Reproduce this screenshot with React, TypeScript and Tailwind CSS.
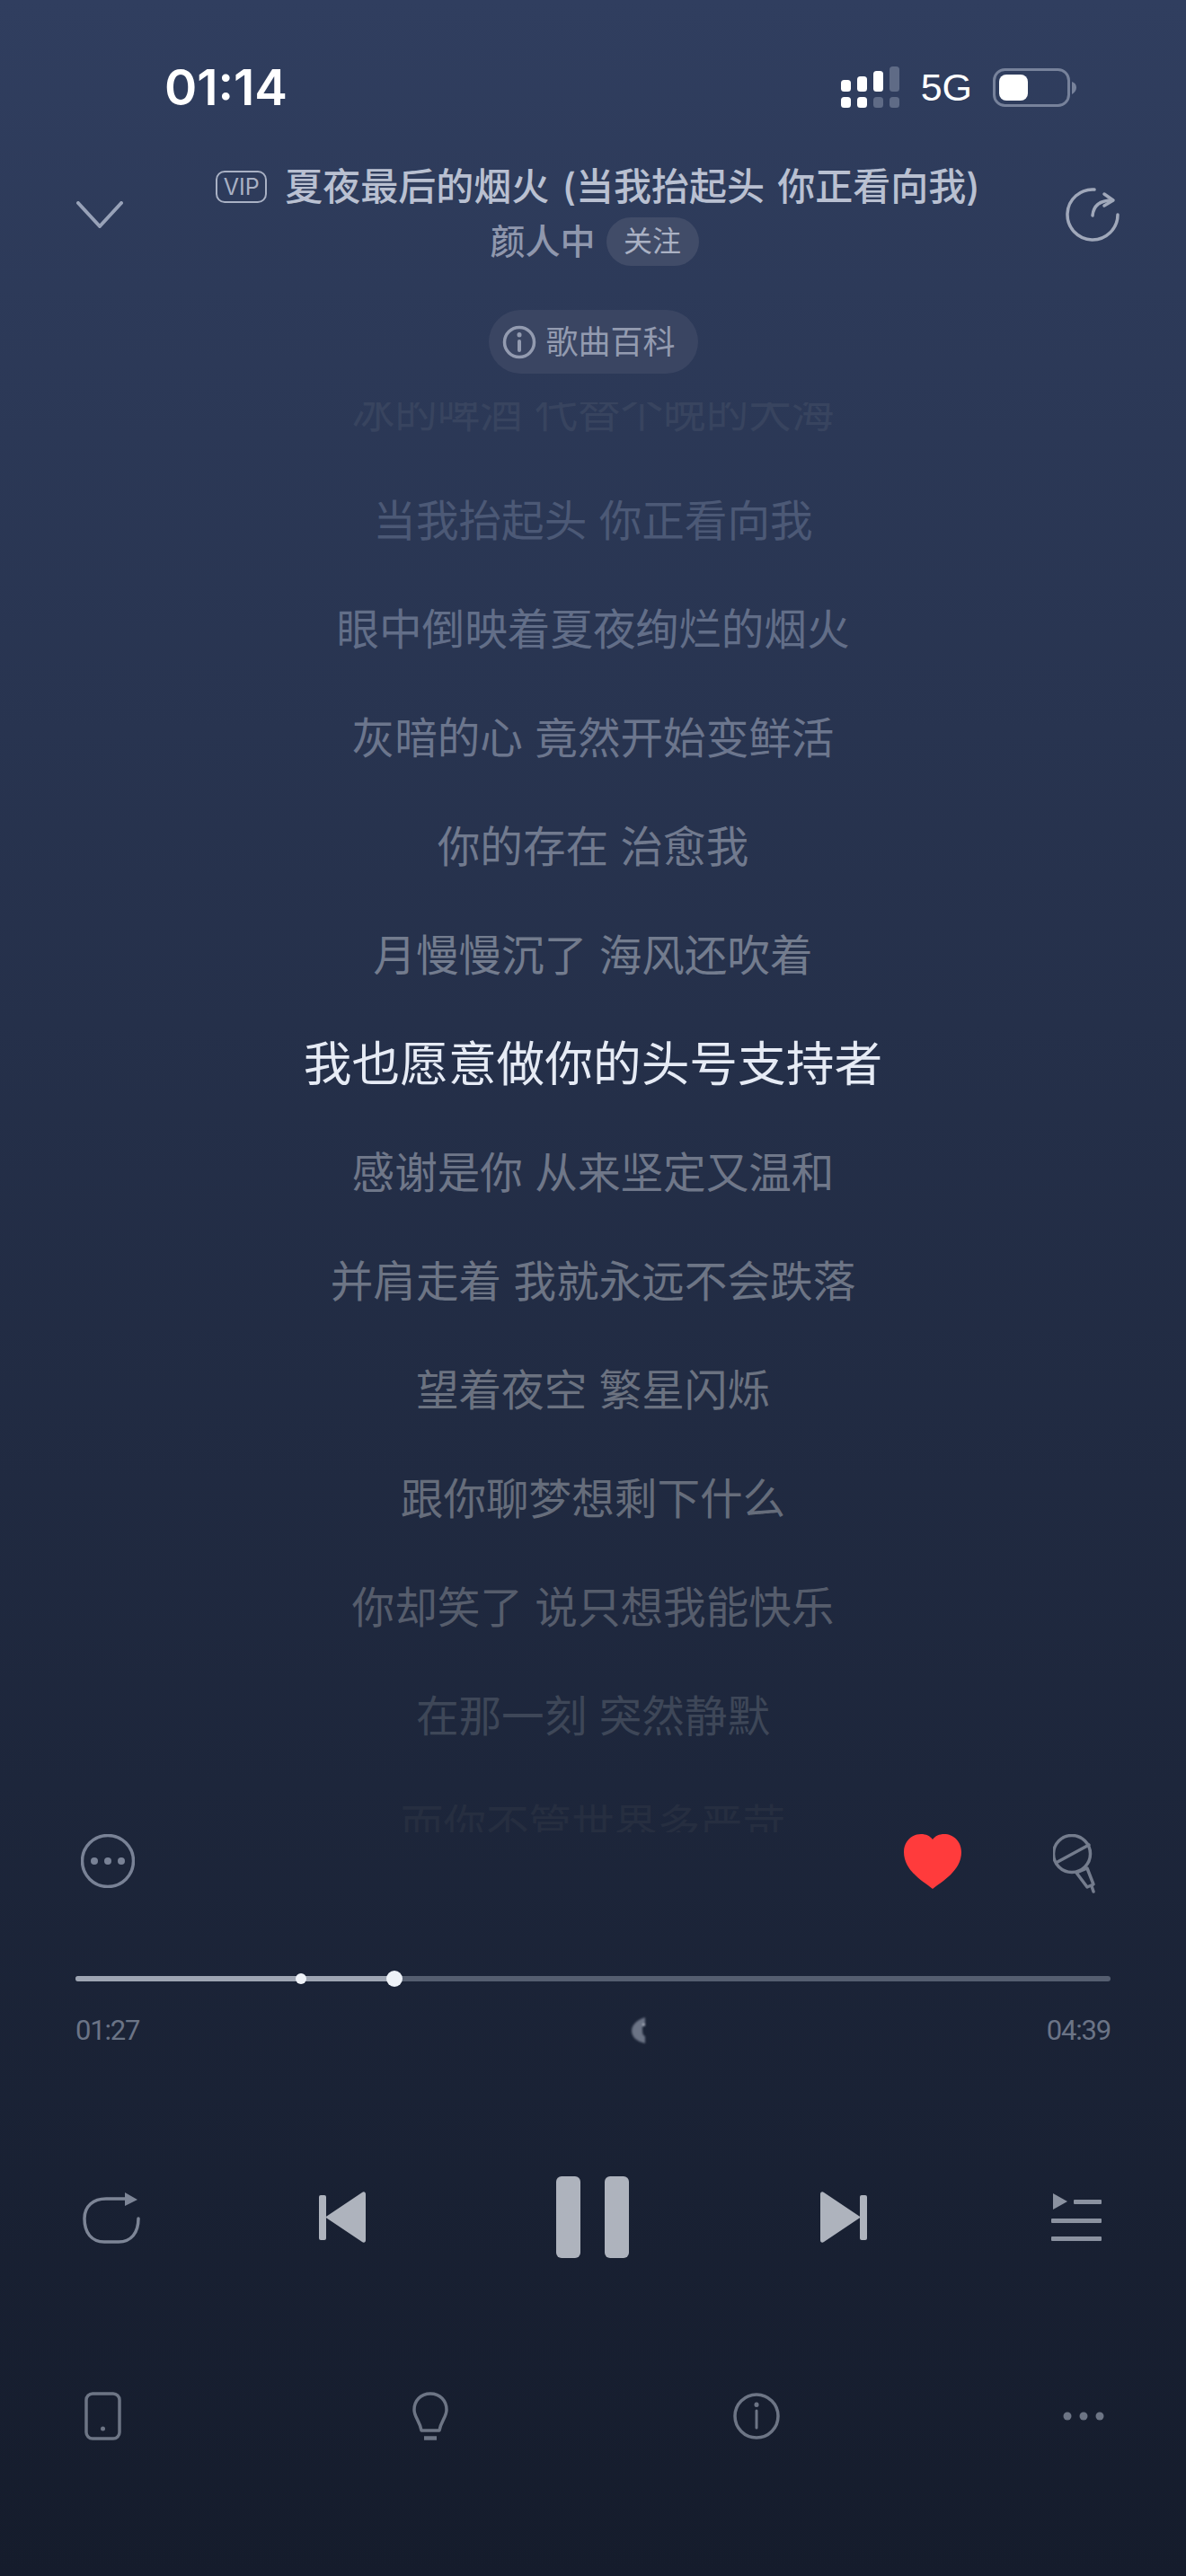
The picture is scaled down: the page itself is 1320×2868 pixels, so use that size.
// Lyrics page of a music player

const cjk = "font-['Inter','Noto_Sans_CJK_SC',sans-serif]";

const lyrics = [
    { text: "冰的啤酒 代替个晚的大海", color: "text-[#38445f]" },
    { text: "当我抬起头 你正看向我", color: "text-[#4c5976]" },
    { text: "眼中倒映着夏夜绚烂的烟火", color: "text-[#626e88]" },
    { text: "灰暗的心 竟然开始变鲜活", color: "text-[#6c768d]" },
    { text: "你的存在 治愈我", color: "text-[#717a8e]" },
    { text: "月慢慢沉了 海风还吹着", color: "text-[#737c8e]" },
    { text: "我也愿意做你的头号支持者", color: "text-[#e6ebf5]", active: true },
    { text: "感谢是你 从来坚定又温和", color: "text-[#6f7789]" },
    { text: "并肩走着 我就永远不会跌落", color: "text-[#6d7585]" },
    { text: "望着夜空 繁星闪烁", color: "text-[#6b7280]" },
    { text: "跟你聊梦想剩下什么", color: "text-[#666d7b]" },
    { text: "你却笑了 说只想我能快乐", color: "text-[#565d6c]" },
    { text: "在那一刻 突然静默", color: "text-[#3e4758]" },
    { text: "而你不管世界多严苛", color: "text-[#262e40]" },
];

function SignalIcon() {
    return (
        <svg width="65" height="46" viewBox="0 0 65 46">
            <rect x="0" y="15" width="11" height="13" rx="3.5" fill="#fff" />
            <rect x="18" y="11" width="11" height="17" rx="3.5" fill="#fff" />
            <rect x="36" y="5" width="11" height="23" rx="3.5" fill="#fff" />
            <rect x="54" y="0" width="11" height="28" rx="3.5" fill="#5f6b86" />
            <rect x="0" y="34" width="11" height="12" rx="3.5" fill="#fff" />
            <rect x="18" y="34" width="11" height="12" rx="3.5" fill="#fff" />
            <rect x="36" y="34" width="11" height="12" rx="3.5" fill="#5f6b86" />
            <rect x="54" y="34" width="11" height="12" rx="3.5" fill="#5f6b86" />
        </svg>
    );
}

function BatteryIcon() {
    return (
        <svg width="93" height="43" viewBox="0 0 93 43">
            <rect x="1.5" y="1.5" width="83" height="40" rx="12" fill="none" stroke="#77829b" strokeWidth="3" />
            <rect x="7" y="7" width="32" height="29" rx="8" fill="#fff" />
            <path d="M88 15 C91 16 93 18 93 21.5 C93 25 91 27 88 29 Z" fill="#77829b" />
        </svg>
    );
}

function ShareIcon() {
    return (
        <svg width="60" height="60" viewBox="0 0 60 60" fill="none" stroke="#a0a8ba" strokeWidth="3.5" strokeLinecap="round" strokeLinejoin="round">
            <path d="M32 2 A28 28 0 1 0 58 30" />
            <path d="M30 31 C31 20 38 14 52 14" />
            <path d="M43 7 L53 14 L43 20" />
        </svg>
    );
}

function MicIcon() {
    return (
        <svg width="48" height="66" viewBox="0 0 48 66" fill="none" stroke="#747c8d" strokeWidth="3.5" strokeLinecap="round" strokeLinejoin="round">
            <circle cx="21" cy="22" r="20.5" />
            <path d="M5 31 L40 12" />
            <path d="M26 43 L38 38 L45 56 L38 59 Z" />
            <path d="M43 58 L45 64" />
        </svg>
    );
}

function PrevIcon({ flip = false }: { flip?: boolean }) {
    return (
        <svg width="52" height="57" viewBox="0 0 52 57" className={flip ? "-scale-x-100" : ""} fill="#aeb3bd">
            <rect x="0" y="4" width="8" height="50" rx="2" />
            <path d="M7 28.5 L48 1 C50 -0.5 52 0.5 52 3 L52 54 C52 56.5 50 57.5 48 56 Z" />
        </svg>
    );
}

function SeekGhost() {
    // the small smudge in the middle of the time row
    return (
        <svg width="16" height="30" viewBox="0 0 16 30" className="ml-[548px] blur-[1px]">
            <path d="M15 1 C5 4 0 10 0 16 C0 23 6 28 15 30 L15 22 C12 21 12 18 12 12 L15 8 Z" fill="#6b7385" />
            <rect x="12" y="8" width="3" height="2.5" fill="#b3b9c5" />
        </svg>
    );
}

export default function App() {
    return (
        <div className={`${cjk} flex h-[2868px] w-[1320px] flex-col overflow-hidden bg-gradient-to-b from-[#303e5f] to-[#151c2c]`}>
            {/* Status bar */}
            <div className="flex h-[178px] items-center justify-between pt-[60px] pb-[44px] pl-[183px] pr-[122px]">
                <span className="text-[55px] font-semibold leading-none text-white">01:14</span>
                <div className="flex items-center">
                    <SignalIcon />
                    <span className="ml-[24px] mr-[23px] font-['Liberation_Sans',sans-serif] text-[43px] leading-none text-white">5G</span>
                    <BatteryIcon />
                </div>
            </div>

            {/* Song header */}
            <div className="flex h-[121px] items-center justify-between pl-[85px] pr-[74px]">
                <svg width="52" height="30" viewBox="0 0 52 30" fill="none" stroke="#98a2b8" strokeWidth="4" strokeLinecap="round" strokeLinejoin="round">
                    <path d="M2 2 L26 28 L50 2" />
                </svg>
                <div className="flex flex-col items-center">
                    <div className="flex h-[60px] items-center pl-[8px]">
                        <span className="mr-[20px] flex h-[36px] w-[57px] items-center justify-center rounded-[10px] border-2 border-[#a9b1c4] text-[25px] leading-none text-[#a9b1c4]">VIP</span>
                        <span className="text-[42px] font-medium leading-none text-[#b9c0d1] [word-spacing:3px]">夏夜最后的烟火 (当我抬起头 你正看向我)</span>
                    </div>
                    <div className="flex h-[61px] items-center">
                        <span className="text-[39px] font-medium leading-none text-[#8f97ad]">颜人中</span>
                        <span className="ml-[12px] flex h-[54px] w-[103px] items-center justify-center rounded-full bg-[#414c68] text-[32px] leading-none text-[#aab1c3]">关注</span>
                    </div>
                </div>
                <ShareIcon />
            </div>

            {/* Song info pill */}
            <div className="mt-[46px] flex justify-center">
                <div className="flex h-[71px] w-[233px] items-center gap-[11px] rounded-full bg-[#3a4562] pl-[15px] text-[36px] leading-none text-[#939bb0]">
                    <svg width="38" height="38" viewBox="0 0 38 38" fill="none" stroke="#939bb0" strokeWidth="3.5" strokeLinecap="round">
                        <circle cx="19" cy="19" r="16.5" />
                        <path d="M19 18 L19 28" strokeWidth="4" />
                        <path d="M19 10.5 L19 11" strokeWidth="5" />
                    </svg>
                    <span className="whitespace-nowrap">歌曲百科</span>
                </div>
            </div>

            {/* Lyrics */}
            <div className="mt-[32px] h-[1592px] overflow-hidden">
                <div className="-mt-[50px] flex flex-col">
                    {lyrics.map((line) => (
                        <div
                            key={line.text}
                            className={`flex h-[121px] items-center justify-center whitespace-nowrap leading-none ${line.color} ${line.active ? "text-[53.7px]" : "text-[47.6px]"}`}
                        >
                            {line.text}
                        </div>
                    ))}
                </div>
            </div>

            {/* Actions */}
            <div className="mt-[2px] flex h-[66px] items-start pl-[90px] pr-[100px]">
                <svg width="60" height="60" viewBox="0 0 60 60" fill="none">
                    <circle cx="30" cy="30" r="28.5" stroke="#798296" strokeWidth="3.5" />
                    <circle cx="15" cy="30" r="4" fill="#798296" />
                    <circle cx="30" cy="30" r="4" fill="#798296" />
                    <circle cx="45" cy="30" r="4" fill="#798296" />
                </svg>
                <svg className="ml-auto" width="64" height="61" viewBox="0 0 64 61">
                    <path d="M32 61 C22 53 0 41 0 20 C0 8 9 0 19 0 C25 0 29 2 32 6 C35 2 39 0 45 0 C55 0 64 8 64 20 C64 41 42 53 32 61 Z" fill="#ff3b3c" />
                </svg>
                <div className="ml-[102px]">
                    <MicIcon />
                </div>
            </div>

            {/* Progress */}
            <div className="mx-[84px] mt-[92px]">
                <div className="relative h-[6px] rounded-full bg-[#555e70]">
                    <div className="h-full w-[355px] rounded-full bg-[#9ea5b3]" />
                    <div className="absolute -top-[3px] left-[245px] h-[12px] w-[12px] rounded-full bg-[#eef2f8]" />
                    <div className="absolute -top-[6px] left-[346px] h-[18px] w-[18px] rounded-full bg-[#eef2f8]" />
                </div>
                <div className="mt-[39px] flex h-[30px] items-center font-['Roboto',sans-serif] text-[31px] leading-none tracking-[-1.2px] text-[#6b7486]">
                    <span>01:27</span>
                    <SeekGhost />
                    <span className="ml-auto">04:39</span>
                </div>
            </div>

            {/* Transport */}
            <div className="mt-[148px] flex h-[91px] items-center pl-[92px]">
                <svg width="64" height="58" viewBox="0 0 64 58" fill="none">
                    <path d="M62 30 C62 46 54 56 40 56 L24 56 C10 56 2 46 2 30 C2 16 12 8 26 8 L50 8" stroke="#7d8596" strokeWidth="3.5" strokeLinecap="round" />
                    <path d="M47 1 L61 9 L47 16 Z" fill="#7d8596" />
                </svg>
                <div className="ml-[199px]">
                    <PrevIcon />
                </div>
                <div className="ml-[212px] flex gap-[27px]">
                    <div className="h-[91px] w-[27px] rounded-[6px] bg-[#aeb3bd]" />
                    <div className="h-[91px] w-[27px] rounded-[6px] bg-[#aeb3bd]" />
                </div>
                <div className="ml-[213px]">
                    <PrevIcon flip />
                </div>
                <svg className="ml-[205px]" width="56" height="53" viewBox="0 0 56 53" fill="#8b92a0">
                    <path d="M2 0 L18 9 L2 18 Z" />
                    <rect x="25" y="7" width="31" height="5" rx="1" />
                    <rect x="0" y="28" width="56" height="5" rx="1" />
                    <rect x="0" y="48" width="56" height="5" rx="1" />
                </svg>
            </div>

            {/* Bottom tools */}
            <div className="mt-[149px] flex h-[54px] items-center pl-[94px]">
                <svg width="41" height="54" viewBox="0 0 41 54" fill="none" stroke="#6d7585" strokeWidth="3.5">
                    <rect x="2" y="2" width="37" height="50" rx="7" />
                    <circle cx="20.5" cy="41" r="2.5" fill="#6d7585" stroke="none" />
                </svg>
                <svg className="ml-[324px]" width="40" height="54" viewBox="0 0 40 54" fill="none" stroke="#6d7585" strokeWidth="3.5" strokeLinejoin="round">
                    <path d="M20 2 C9 2 2 10 2 20 C2 28 8 32 10 43 L30 43 C32 32 38 28 38 20 C38 10 31 2 20 2 Z" />
                    <path d="M13 51.5 L27 51.5" strokeWidth="4.5" />
                </svg>
                <svg className="ml-[317px]" width="52" height="52" viewBox="0 0 52 52" fill="none" stroke="#6d7585" strokeWidth="3.5" strokeLinecap="round">
                    <circle cx="26" cy="26" r="24" />
                    <path d="M26 20 L26 39" strokeWidth="3" />
                    <path d="M26 13 L26 13.5" strokeWidth="5" />
                </svg>
                <svg className="ml-[315px]" width="46" height="10" viewBox="0 0 46 10" fill="#6d7585">
                    <circle cx="5" cy="5" r="4.5" />
                    <circle cx="23" cy="5" r="4.5" />
                    <circle cx="41" cy="5" r="4.5" />
                </svg>
            </div>
        </div>
    );
}
